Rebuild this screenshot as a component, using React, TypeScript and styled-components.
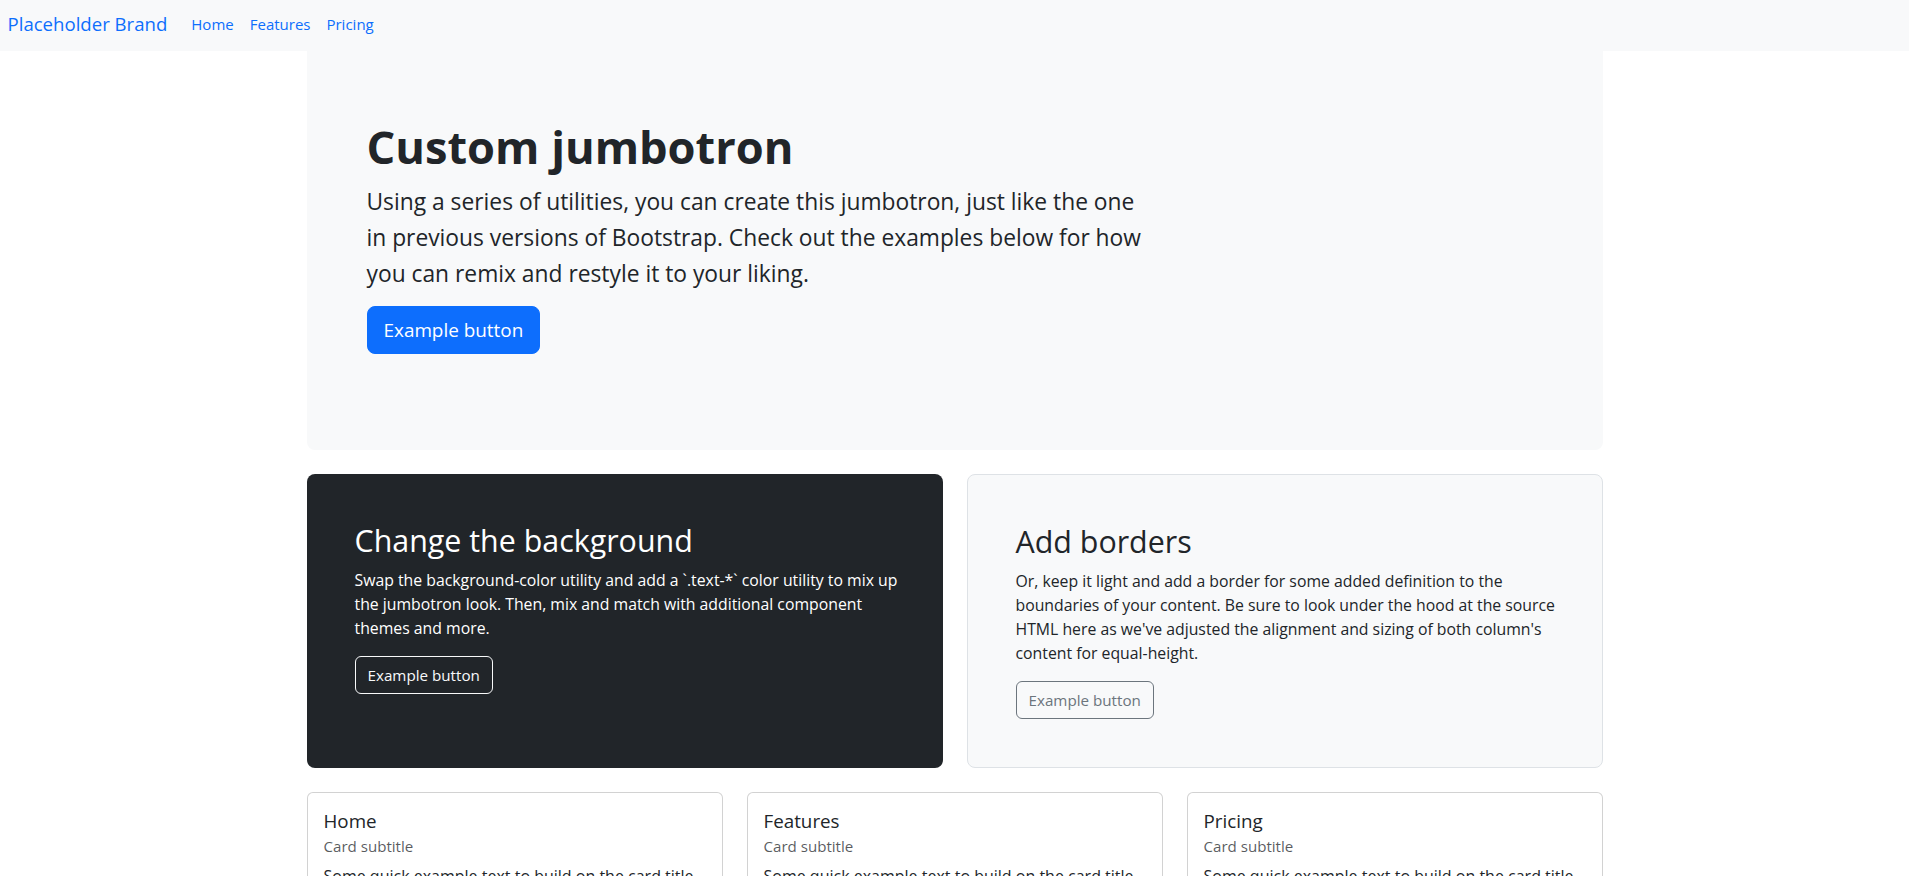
import React from "react";
import styled, { createGlobalStyle } from "styled-components";

const GlobalStyle = createGlobalStyle`
  * { box-sizing: border-box; }
  html, body { margin: 0; padding: 0; }
  body {
    font-family: "Open Sans", "Noto Sans", sans-serif;
    font-size: 15.5px;
    line-height: 24px;
    color: #212529;
    background: #ffffff;
    -webkit-font-smoothing: antialiased;
  }
`;

const NavBar = styled.nav`
  display: flex;
  align-items: center;
  height: 51px;
  padding: 0 0 3px 7.5px;
  background: #f8f9fa;
`;

const Brand = styled.a`
  font-size: 18.6px;
  line-height: 30px;
  color: #0d6efd;
  text-decoration: none;
  margin-right: 16px;
`;

const NavList = styled.ul`
  display: flex;
  list-style: none;
  margin: 0;
  padding: 0;
`;

const NavLink = styled.a`
  display: block;
  padding: 0 8px;
  font-size: 15px;
  line-height: 24px;
  color: #0d6efd;
  text-decoration: none;
`;

const Main = styled.main`
  max-width: 1320px;
  margin: 0 auto;
  padding: 0 12px;
  display: flex;
  flex-direction: column;
  gap: 24px;
`;

const Jumbotron = styled.section`
  background: #f8f9fa;
  border-radius: 0 0 8px 8px;
  padding: 67px 60px 96px;
`;

const HeroTitle = styled.h1`
  margin: 0 0 8px;
  font-size: 45.2px;
  line-height: 57.6px;
  font-weight: 700;
`;

const Lead = styled.p`
  margin: 0 0 14px;
  font-size: 22.8px;
  line-height: 36px;
  white-space: nowrap;
`;

const PrimaryButton = styled.button`
  font-family: inherit;
  font-size: 18.9px;
  line-height: 30px;
  padding: 8px 16px;
  color: #fff;
  background: #0d6efd;
  border: 1px solid #0d6efd;
  border-radius: 8px;
  cursor: pointer;
`;

const FeatureRow = styled.div`
  display: grid;
  grid-template-columns: repeat(2, minmax(0, 1fr));
  gap: 24px;
`;

const FeatureBox = styled.div<{ $dark?: boolean }>`
  padding: 48px;
  border-radius: 8px;
  background: ${(p) => (p.$dark ? "#212529" : "#f8f9fa")};
  color: ${(p) => (p.$dark ? "#ffffff" : "#212529")};
  border: ${(p) => (p.$dark ? "none" : "1px solid #dee2e6")};
`;

const FeatureTitle = styled.h2`
  margin: 0 0 8px;
  font-size: 30.4px;
  line-height: 38.4px;
  font-weight: 400;
`;

const FeatureText = styled.p`
  margin: 0 0 16px;
  font-size: 15.8px;
  line-height: 24px;
  white-space: nowrap;
`;

const OutlineButton = styled.button<{ $tone: "light" | "secondary" }>`
  font-family: inherit;
  font-size: 15.2px;
  line-height: 24px;
  padding: 6px 12px;
  background: transparent;
  border-radius: 6px;
  cursor: pointer;
  color: ${(p) => (p.$tone === "light" ? "#f8f9fa" : "#6c757d")};
  border: 1px solid ${(p) => (p.$tone === "light" ? "#f8f9fa" : "#6c757d")};
`;

const CardRow = styled.div`
  display: grid;
  grid-template-columns: repeat(3, minmax(0, 1fr));
  gap: 24px;
  padding-bottom: 48px;
`;

const Card = styled.div`
  background: #fff;
  border: 1px solid rgba(0, 0, 0, 0.175);
  border-radius: 6px;
  padding: 16px;
`;

const CardTitle = styled.h5`
  margin: 0 0 8px;
  font-size: 18.8px;
  line-height: 24px;
  font-weight: 400;
`;

const CardSubtitle = styled.h6`
  margin: -4px 0 8px;
  font-size: 15.1px;
  line-height: 19.2px;
  font-weight: 400;
  color: rgba(33, 37, 41, 0.75);
`;

const CardText = styled.p`
  margin: 0 0 16px;
  font-size: 16px;
  line-height: 24px;
`;

const CardLinks = styled.div`
  display: flex;
  gap: 16px;
`;

const CardLink = styled.a`
  color: #0d6efd;
  text-decoration: underline;
  font-size: 15.5px;
`;

const cards = ["Home", "Features", "Pricing"];

export default function App() {
  return (
    <>
      <GlobalStyle />
      <NavBar>
        <Brand href="#">Placeholder Brand</Brand>
        <NavList>
          <li><NavLink href="#">Home</NavLink></li>
          <li><NavLink href="#">Features</NavLink></li>
          <li><NavLink href="#">Pricing</NavLink></li>
        </NavList>
      </NavBar>
      <Main>
        <Jumbotron>
          <HeroTitle>Custom jumbotron</HeroTitle>
          <Lead>
            Using a series of utilities, you can create this jumbotron, just like the one
            <br />
            in previous versions of Bootstrap. Check out the examples below for how
            <br />
            you can remix and restyle it to your liking.
          </Lead>
          <PrimaryButton type="button">Example button</PrimaryButton>
        </Jumbotron>
        <FeatureRow>
          <FeatureBox $dark>
            <FeatureTitle>Change the background</FeatureTitle>
            <FeatureText>
              Swap the background-color utility and add a `.text-*` color utility to mix up
              <br />
              the jumbotron look. Then, mix and match with additional component
              <br />
              themes and more.
            </FeatureText>
            <OutlineButton $tone="light" type="button">Example button</OutlineButton>
          </FeatureBox>
          <FeatureBox>
            <FeatureTitle>Add borders</FeatureTitle>
            <FeatureText>
              Or, keep it light and add a border for some added definition to the
              <br />
              boundaries of your content. Be sure to look under the hood at the source
              <br />
              HTML here as we've adjusted the alignment and sizing of both column's
              <br />
              content for equal-height.
            </FeatureText>
            <OutlineButton $tone="secondary" type="button">Example button</OutlineButton>
          </FeatureBox>
        </FeatureRow>
        <CardRow>
          {cards.map((c) => (
            <Card key={c}>
              <CardTitle>{c}</CardTitle>
              <CardSubtitle>Card subtitle</CardSubtitle>
              <CardText>
                Some quick example text to build on the card title and make up the bulk of the card's content.
              </CardText>
              <CardLinks>
                <CardLink href="#">Card link</CardLink>
                <CardLink href="#">Another link</CardLink>
              </CardLinks>
            </Card>
          ))}
        </CardRow>
      </Main>
    </>
  );
}
